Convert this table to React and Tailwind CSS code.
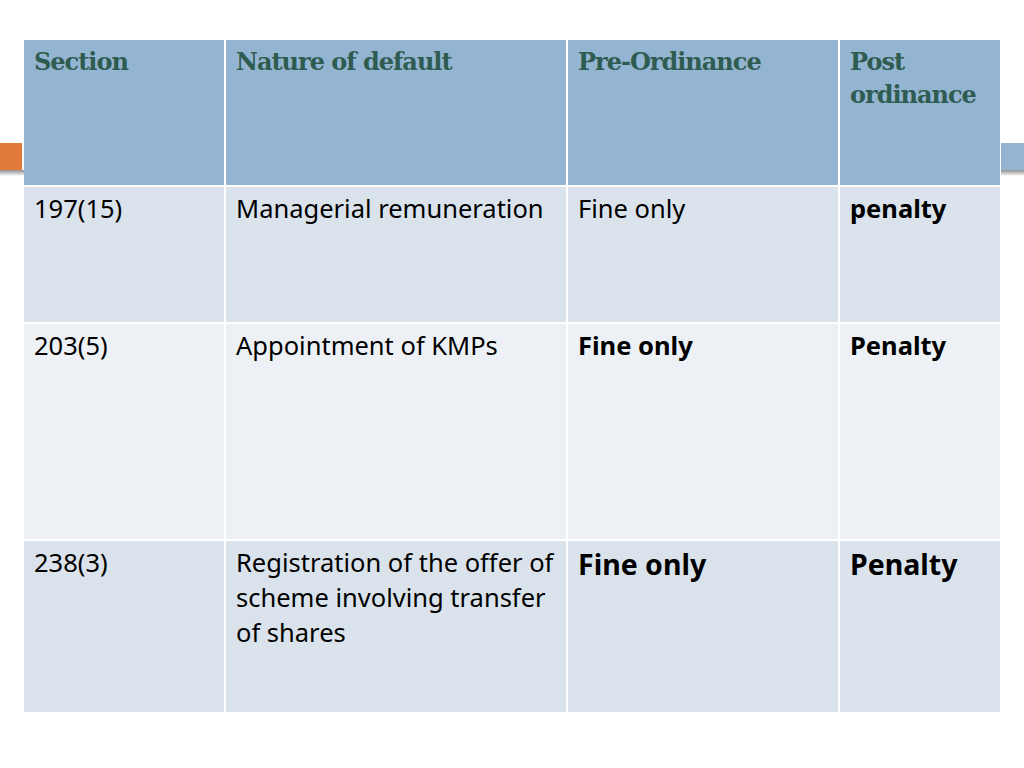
import React from 'react'

const rows = [
  {
    h: 'h-[135px]',
    bg: 'bg-[#dae3eb]',
    cells: [
      { text: '197(15)' },
      { text: 'Managerial remuneration' },
      { text: 'Fine only' },
      { text: 'penalty', bold: true },
    ],
  },
  {
    h: 'h-[215px]',
    bg: 'bg-[#edf1f5]',
    cells: [
      { text: '203(5)' },
      { text: 'Appointment of KMPs' },
      { text: 'Fine only', bold: true },
      { text: 'Penalty', bold: true },
    ],
  },
  {
    h: 'h-[171px]',
    bg: 'bg-[#dae3eb]',
    cells: [
      { text: '238(3)' },
      { text: 'Registration of the offer of scheme involving transfer of shares' },
      { text: 'Fine only', bold: true, big: true },
      { text: 'Penalty', bold: true, big: true },
    ],
  },
]

const headers = ['Section', 'Nature of default', 'Pre-Ordinance', 'Post ordinance']

export default function App() {
  return (
    <div className="relative w-[1024px] h-[768px] bg-white overflow-hidden">
      {/* slide accent bar, sits behind the table */}
      <div className="absolute left-0 top-[143px] w-[22px] h-[27px] bg-[#e07b3b]" />
      <div className="absolute left-0 top-[170px] w-[24px] h-[6px] bg-gradient-to-b from-[#8f8f8f] to-white" />
      <div className="absolute right-0 top-[143px] w-[23px] h-[27px] bg-[#94b5d2]" />
      <div className="absolute right-0 top-[170px] w-[23px] h-[6px] bg-gradient-to-b from-[#8f8f8f] to-white" />

      <div className="relative pt-[40px] pl-[24px]">
        <div className="grid grid-cols-[200px_340px_270px_160px] gap-[2px] w-[976px]">
          {headers.map((t) => (
            <div key={t} className="h-[145px] bg-[#94b5d1] pl-[10px] pr-2 pt-[5px]">
              <div
                className="text-[24px] leading-[33px] font-bold text-[#2f5c50]"
                style={{ fontFamily: '"DejaVu Serif", "Liberation Serif", serif', letterSpacing: '-1px' }}
              >
                {t}
              </div>
            </div>
          ))}
          {rows.map((r, i) =>
            r.cells.map((c, j) => (
              <div
                key={i + '-' + j}
                className={`${r.h} ${r.bg} pl-[10px] pr-1 pt-[4px] text-black`}
                style={{ fontFamily: '"Noto Sans", "Open Sans", sans-serif' }}
              >
                <div
                  className={`${c.big ? 'text-[28.5px] leading-[38px]' : 'text-[25.5px] leading-[35px]'} ${c.bold ? 'font-bold' : ''}`}
                >
                  {c.text}
                </div>
              </div>
            ))
          )}
        </div>
      </div>
    </div>
  )
}
